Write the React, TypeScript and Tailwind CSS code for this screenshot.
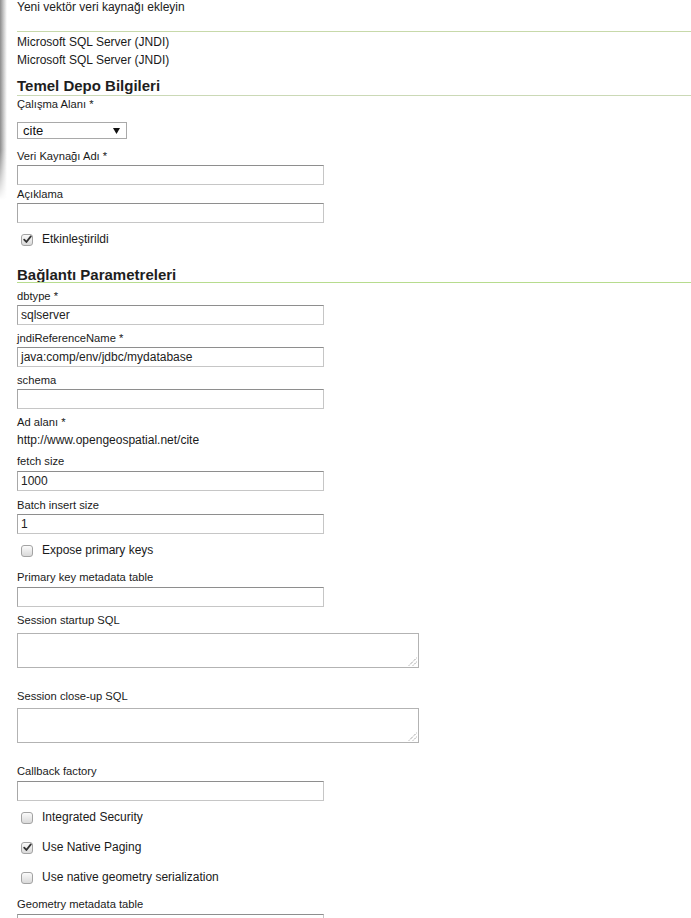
import React from "react";

const labelCls = "h-[17px] leading-[17px] text-[11.2px] text-[#1a1a1a] whitespace-nowrap";

function Label({ text, mt }: { text: string; mt: string }) {
  return <div className={`${labelCls} ${mt}`}>{text}</div>;
}

function TextInput({ value, mt }: { value?: string; mt: string }) {
  return (
    <div
      className={`${mt} w-[307px] h-[20px] border border-[#c6c6c6] border-t-[#8e8e8e] border-l-[#a8a8a8] bg-white pl-[3px] text-[12px] leading-[18px] text-[#222] whitespace-nowrap overflow-hidden`}
    >
      {value ?? ""}
    </div>
  );
}

function TextArea({ mt }: { mt: string }) {
  return (
    <div className={`${mt} relative w-[402px] h-[35px] border border-[#b3b3b3] bg-white`}>
      <svg className="absolute right-[1px] bottom-[1px]" width="9" height="9" viewBox="0 0 9 9">
        <line x1="1" y1="8.5" x2="8.5" y2="1" stroke="#7a7a7a" strokeWidth="1" strokeDasharray="1 1" />
        <line x1="5" y1="8.5" x2="8.5" y2="5" stroke="#7a7a7a" strokeWidth="1" strokeDasharray="1 1" />
      </svg>
    </div>
  );
}

function Checkbox({ label, checked, mt }: { label: string; checked?: boolean; mt: string }) {
  return (
    <div className={`${mt} h-[17px] flex items-center`}>
      <span className="ml-[4px] w-[12px] h-[12px] rounded-[3px] border border-[#a3a3a3] bg-gradient-to-b from-[#fbfbfb] to-[#d9d9d9] flex items-center justify-center">
        {checked && (
          <svg width="9" height="9" viewBox="0 0 9 9">
            <path d="M1.2 4.6 L3.4 7 L7.8 1.4" fill="none" stroke="#333" strokeWidth="1.8" strokeLinecap="round" strokeLinejoin="round" />
          </svg>
        )}
      </span>
      <span className="ml-[9px] text-[12px] leading-[17px] text-[#1a1a1a] whitespace-nowrap">{label}</span>
    </div>
  );
}

export default function App() {
  return (
    <div className="relative w-[691px] h-[918px] overflow-hidden bg-white font-['Liberation_Sans',Arial,sans-serif]">
      <div className="absolute left-0 top-0 w-[7px] h-[200px] bg-gradient-to-r from-[#8c8c8c] via-[#c8c8c8] to-transparent [mask-image:linear-gradient(to_bottom,black_0%,black_75%,transparent_100%)]" />
      <div className="flex flex-col pl-[17px]">
        <div className="h-[15px] leading-[15px] text-[12px] text-[#222] whitespace-nowrap">Yeni vektör veri kaynağı ekleyin</div>
        <div className="mt-[16px] h-px bg-[#c7d9aa]" />
        <div className="mt-[1px] h-[18px] leading-[18px] text-[12px] text-[#1a1a1a]">Microsoft SQL Server (JNDI)</div>
        <div className="h-[18px] leading-[18px] text-[12px] text-[#1a1a1a]">Microsoft SQL Server (JNDI)</div>
        <div className="mt-[7px] h-[19px] leading-[19px] text-[15px] font-bold text-[#1e1e1e]">Temel Depo Bilgileri</div>
        <div className="h-px bg-[#cbd9b6]" />
        <Label text="Çalışma Alanı *" mt="mt-0" />
        <div className="mt-[9px] w-[110px] h-[17px] border border-[#a9a9a9] bg-white flex items-center justify-between pl-[5px] pr-[6px]">
          <span className="text-[13px] leading-[15px] text-[#111]">cite</span>
          <svg width="7" height="6" viewBox="0 0 7 6">
            <path d="M0 0 H7 L3.5 6 Z" fill="#111" />
          </svg>
        </div>
        <Label text="Veri Kaynağı Adı *" mt="mt-[9px]" />
        <TextInput mt="mt-0" />
        <Label text="Açıklama" mt="mt-[1px]" />
        <TextInput mt="mt-0" />
        <Checkbox label="Etkinleştirildi" checked mt="mt-[8px]" />
        <div className="mt-[19px] h-[15px] leading-[15px] text-[15px] font-bold text-[#1e1e1e]">Bağlantı Parametreleri</div>
        <div className="h-px bg-[#b7dc8e]" />
        <Label text="dbtype *" mt="mt-[5px]" />
        <TextInput value="sqlserver" mt="mt-0" />
        <Label text="jndiReferenceName *" mt="mt-[5px]" />
        <TextInput value="java:comp/env/jdbc/mydatabase" mt="mt-0" />
        <Label text="schema" mt="mt-[5px]" />
        <TextInput mt="mt-0" />
        <Label text="Ad alanı *" mt="mt-[5px]" />
        <div className="mt-[1px] h-[17px] leading-[17px] text-[12px] text-[#1a1a1a]">http://www.opengeospatial.net/cite</div>
        <Label text="fetch size" mt="mt-[4px]" />
        <TextInput value="1000" mt="mt-[1px]" />
        <Label text="Batch insert size" mt="mt-[6px]" />
        <TextInput value="1" mt="mt-0" />
        <Checkbox label="Expose primary keys" mt="mt-[8px]" />
        <Label text="Primary key metadata table" mt="mt-[10px]" />
        <TextInput mt="mt-[1px]" />
        <Label text="Session startup SQL" mt="mt-[5px]" />
        <TextArea mt="mt-[4px]" />
        <Label text="Session close-up SQL" mt="mt-[20px]" />
        <TextArea mt="mt-[3px]" />
        <Label text="Callback factory" mt="mt-[20px]" />
        <TextInput mt="mt-[1px]" />
        <Checkbox label="Integrated Security" mt="mt-[8px]" />
        <Checkbox label="Use Native Paging" checked mt="mt-[13px]" />
        <Checkbox label="Use native geometry serialization" mt="mt-[13px]" />
        <Label text="Geometry metadata table" mt="mt-[10px]" />
        <TextInput mt="mt-[1px]" />
      </div>
    </div>
  );
}
